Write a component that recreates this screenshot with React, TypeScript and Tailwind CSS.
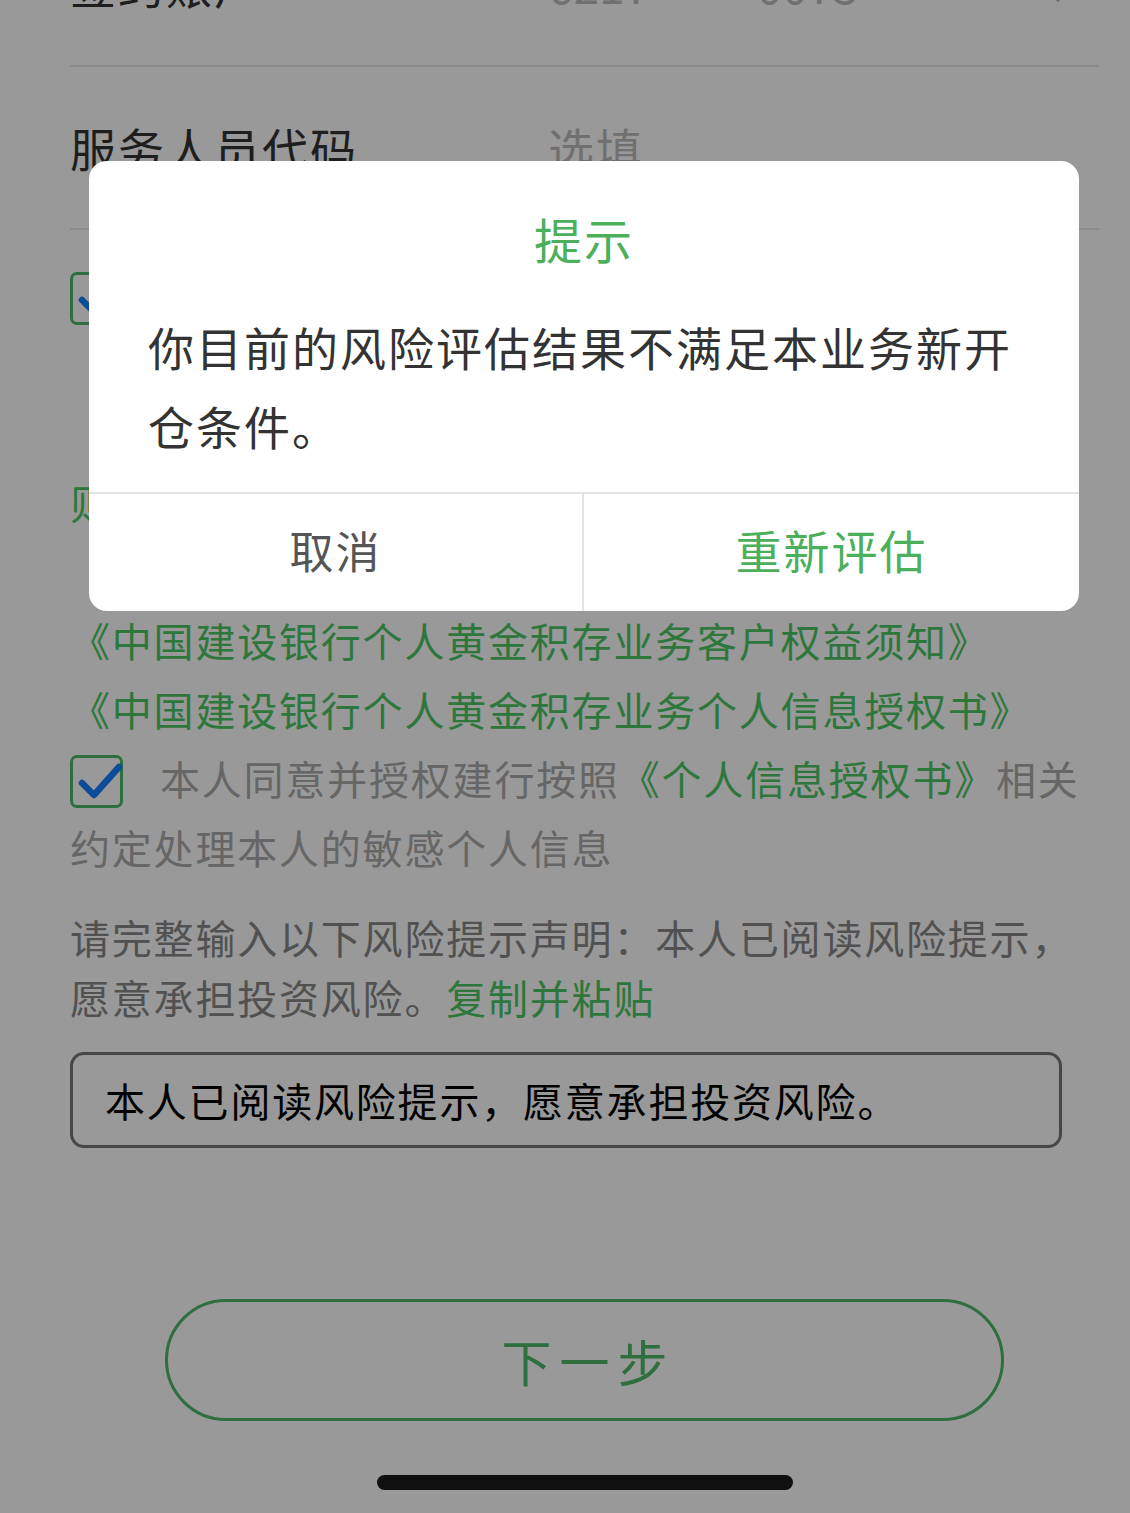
import React from 'react'

const CheckBox: React.FC = () => (
  <span className="inline-flex w-[53px] h-[53px] border-[3px] border-[#4eb869] rounded-[7px] items-start justify-start align-middle mr-[37px] -mt-[6px]">
    <svg viewBox="0 0 47 47" className="w-[47px] h-[47px] overflow-visible">
      <path d="M9 25 L21 37 L46 9" fill="none" stroke="#167fff" strokeWidth="6.5" strokeLinecap="round" strokeLinejoin="round" />
    </svg>
  </span>
)

export default function App() {
  return (
    <div className="relative w-[1130px] h-[1513px] overflow-hidden bg-white font-['Noto_Sans_CJK_SC','Noto_Sans',sans-serif]">
      {/* 页面内容 */}
      <div className="pl-[70px] pr-[31px] -mt-[96px]">
        <div className="h-[163px] border-b-2 border-[#e6e6e6] flex items-center">
          <div className="w-[478px] text-[46px] tracking-[2px] text-[#333]">签约账户</div>
          <div className="flex-1 text-[46px] text-[#bbb]">6217 **** 0075</div>
          <svg viewBox="0 0 24 40" className="w-[24px] h-[44px] mr-[22px]">
            <path d="M4 4 L18 20 L4 36" fill="none" stroke="#aaa" strokeWidth="3" />
          </svg>
        </div>
        <div className="h-[163px] border-b-2 border-[#e6e6e6] flex items-center">
          <div className="w-[478px] text-[46px] tracking-[2px] text-[#333]">服务人员代码</div>
          <div className="flex-1 text-[46px] tracking-[2px] text-[#bbb]">选填</div>
        </div>

        {/* 协议 */}
        <div className="pt-[31px] text-[40px] leading-[69px] tracking-[1.8px] text-[#aaa] whitespace-nowrap">
          <div>
            <CheckBox />
            本人已阅读并同意以下协议：
          </div>
          <div className="text-[#4ec765]">《中国建设银行个人黄金积存业务协议》</div>
          <div className="text-[#4ec765]">《中国建设银行个人黄金积存业务交易规</div>
          <div className="text-[#4ec765]">则》《中国建设银行产品风险揭示书》</div>
          <div className="text-[#4ec765]">《中国建设银行个人黄金积存业务产品说明书》</div>
          <div className="text-[#4ec765]">《中国建设银行个人黄金积存业务客户权益须知》</div>
          <div className="text-[#4ec765]">《中国建设银行个人黄金积存业务个人信息授权书》</div>
          <div>
            <CheckBox />
            本人同意并授权建行按照<span className="text-[#4ec765]">《个人信息授权书》</span>相关
          </div>
          <div>约定处理本人的敏感个人信息</div>
        </div>

        <div className="mt-[25px] text-[40px] leading-[60px] tracking-[1.8px] text-[#888] whitespace-nowrap">
          请完整输入以下风险提示声明：本人已阅读风险提示，
          <br />
          愿意承担投资风险。<span className="text-[#4ec765]">复制并粘贴</span>
        </div>

        <div className="mt-[25px] w-[992px] h-[96px] border-[3px] border-[#777] rounded-[14px] flex items-center pl-[32px] text-[40px] tracking-[1.8px] text-black">
          本人已阅读风险提示，愿意承担投资风险。
        </div>

        <div className="mt-[151px] flex justify-center">
          <button className="w-[839px] h-[122px] rounded-full border-[3px] border-[#4eb869] text-[50px] tracking-[8px] pl-[8px] text-[#4eb869] flex items-center justify-center">
            下一步
          </button>
        </div>

        <div className="mt-[54px] flex justify-center">
          <div className="w-[416px] h-[15px] rounded-full bg-[#1c1c1c]" />
        </div>
      </div>

      {/* 遮罩 */}
      <div className="absolute inset-0 bg-black/40" />

      {/* 提示弹窗 */}
      <div className="absolute left-[89px] top-[161px] w-[990px] rounded-[18px] bg-white overflow-hidden">
        <div className="pt-[47px] text-center text-[48px] leading-[60px] text-[#4caf5c] tracking-[2px]">提示</div>
        <div className="mt-[39px] pl-[59px] pb-[27px] text-[46px] leading-[79px] tracking-[2px] text-[#333] whitespace-nowrap">
          你目前的风险评估结果不满足本业务新开
          <br />
          仓条件。
        </div>
        <div className="flex h-[119px] border-t-2 border-[#e3e3e3]">
          <button className="w-[495px] border-r-2 border-[#e3e3e3] pb-[6px] text-[44px] tracking-[2px] text-[#555]">取消</button>
          <button className="flex-1 pb-[6px] text-[46px] tracking-[2px] text-[#4caf5c]">重新评估</button>
        </div>
      </div>
    </div>
  )
}
